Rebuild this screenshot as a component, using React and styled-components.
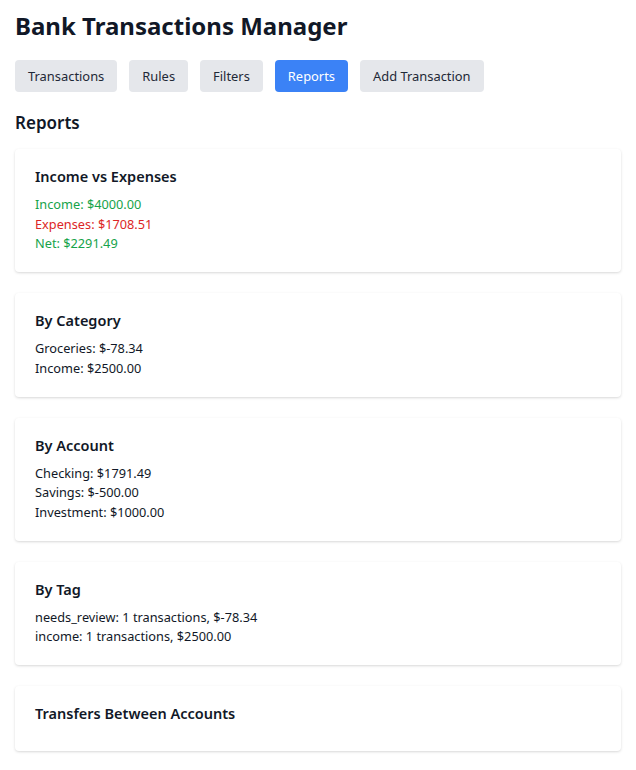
import React from "react";
import styled, { createGlobalStyle } from "styled-components";

const GlobalStyle = createGlobalStyle`
  body {
    margin: 0;
    background: #ffffff;
    font-family: "Noto Sans", "Open Sans", sans-serif;
    color: #111827;
  }
`;

const Page = styled.div`
  padding: 10px 15px 20px;
`;

const Title = styled.h1`
  font-size: 24px;
  font-weight: 700;
  line-height: 32px;
  margin: 0 0 18px;
  color: #111827;
`;

const Nav = styled.div`
  display: flex;
  gap: 12px;
  margin-bottom: 19px;
`;

const NavButton = styled.button`
  font-family: inherit;
  font-size: 12.9px;
  line-height: 20px;
  padding: 6px 13px;
  border: none;
  border-radius: 4px;
  cursor: pointer;
  background: ${(p) => (p.$active ? "#3b82f6" : "#e5e7eb")};
  color: ${(p) => (p.$active ? "#ffffff" : "#1f2937")};
`;

const SectionTitle = styled.h2`
  font-size: 17px;
  font-weight: 600;
  line-height: 24px;
  margin: 0 0 14px;
`;

const Card = styled.div`
  background: #ffffff;
  border-radius: 4px;
  box-shadow: 0 1px 3px rgba(0, 0, 0, 0.12), 0 1px 2px rgba(0, 0, 0, 0.04);
  padding: 16px 20px 18.5px;
  margin-bottom: 21px;
`;

const CardTitle = styled.h3`
  font-size: 14.5px;
  font-weight: 600;
  line-height: 22px;
  margin: 0 0 8px;
`;

const Line = styled.div`
  font-size: 12.75px;
  line-height: 19.5px;
  color: ${(p) =>
    p.$tone === "good" ? "#16a34a" : p.$tone === "bad" ? "#dc2626" : "#111827"};
`;

const tabs = ["Transactions", "Rules", "Filters", "Reports", "Add Transaction"];

const reports = [
  {
    title: "Income vs Expenses",
    lines: [
      { text: "Income: $4000.00", tone: "good" },
      { text: "Expenses: $1708.51", tone: "bad" },
      { text: "Net: $2291.49", tone: "good" },
    ],
  },
  {
    title: "By Category",
    lines: [{ text: "Groceries: $-78.34" }, { text: "Income: $2500.00" }],
  },
  {
    title: "By Account",
    lines: [
      { text: "Checking: $1791.49" },
      { text: "Savings: $-500.00" },
      { text: "Investment: $1000.00" },
    ],
  },
  {
    title: "By Tag",
    lines: [
      { text: "needs_review: 1 transactions, $-78.34" },
      { text: "income: 1 transactions, $2500.00" },
    ],
  },
  { title: "Transfers Between Accounts", lines: [] },
];

export default function App() {
  return (
    <Page>
      <GlobalStyle />
      <Title>Bank Transactions Manager</Title>
      <Nav>
        {tabs.map((t) => (
          <NavButton key={t} $active={t === "Reports"}>
            {t}
          </NavButton>
        ))}
      </Nav>
      <SectionTitle>Reports</SectionTitle>
      {reports.map((r) => (
        <Card key={r.title}>
          <CardTitle>{r.title}</CardTitle>
          {r.lines.map((l) => (
            <Line key={l.text} $tone={l.tone}>
              {l.text}
            </Line>
          ))}
        </Card>
      ))}
    </Page>
  );
}
